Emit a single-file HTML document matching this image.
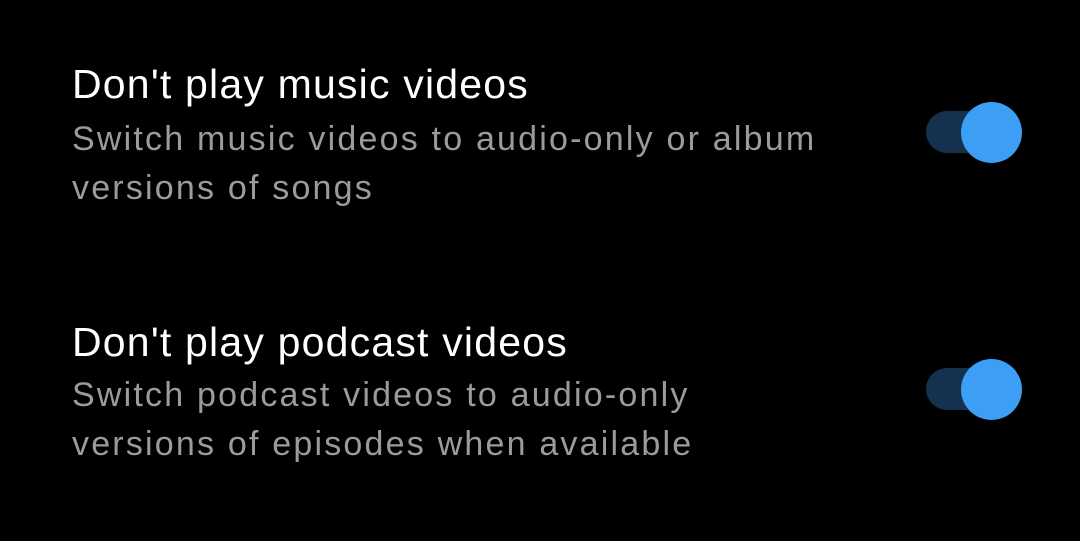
<!DOCTYPE html>
<html><head><style>
html,body{margin:0;padding:0;background:#000;width:1080px;height:541px;overflow:hidden;font-family:"Liberation Sans",sans-serif}
.t{position:absolute;left:72px;color:#fff;font-size:41px;line-height:1;white-space:nowrap;letter-spacing:1.2px}
.s{position:absolute;left:72px;color:#9b9b9b;font-size:34px;line-height:49px;white-space:nowrap;letter-spacing:2.2px}
.tr{position:absolute;left:926px;width:80px;height:42px;border-radius:21px;background:#14314d}
.k{position:absolute;width:61px;height:61px;border-radius:50%;background:#3d9ef6}
</style></head><body>
<div class="t" style="top:64px">Don't play music videos</div>
<div class="s" style="top:115px">Switch music videos to audio-only or album<br>versions of songs</div>
<div class="tr" style="top:111px"></div><div class="k" style="left:961px;top:102px"></div>
<div class="t" style="top:322px">Don't play podcast videos</div>
<div class="s" style="top:371px">Switch podcast videos to audio-only<br>versions of episodes when available</div>
<div class="tr" style="top:368px"></div><div class="k" style="left:961px;top:359px"></div>
</body></html>
